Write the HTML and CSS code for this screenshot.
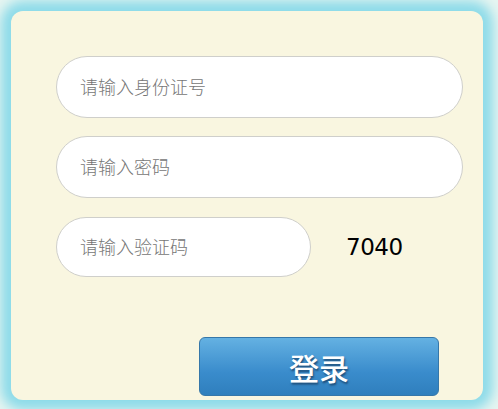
FILE: index.html
```html
<!DOCTYPE html>
<html lang="zh">
<head>
<meta charset="utf-8">
<link rel="stylesheet" href="styles.css">
</head>
<body>
  <div class="card">
    <form class="form">
      <input class="field" type="text" placeholder="请输入身份证号">
      <input class="field" type="password" placeholder="请输入密码">
      <div class="code-row">
        <input class="field code" type="text" placeholder="请输入验证码">
        <span class="captcha">7040</span>
      </div>
      <button class="login" type="button">登录</button>
    </form>
  </div>
</body>
</html>
```
FILE: styles.css
```css
html, body {
  margin: 0;
  padding: 0;
  background: #e6f5f1;
}
body {
  width: 498px;
  height: 409px;
  padding: 11px;
  box-sizing: border-box;
  overflow: hidden;
}
.card {
  width: 472px;
  height: 389px;
  box-sizing: border-box;
  background: #f9f6e0;
  border-radius: 12px;
  box-shadow: 0 0 12px 10px #8ddbe9;
  padding: 45px 0 0 45px;
}
.form {
  display: flex;
  flex-direction: column;
  width: 407px;
}
.field {
  box-sizing: border-box;
  width: 407px;
  height: 62px;
  margin: 0 0 18px 0;
  padding: 0 0 3px 23px;
  border: 1px solid #cfcfcb;
  border-radius: 31px;
  background: #fff;
  font-family: "Noto Sans CJK SC", "Noto Sans", sans-serif;
  font-size: 18px;
  font-weight: 300;
  color: #333;
  outline: none;
}
.field::placeholder {
  color: #767676;
}
.code-row {
  display: flex;
  align-items: center;
  margin-top: 1px;
}
.field.code {
  width: 255px;
  height: 60px;
  margin: 0;
  border-radius: 30px;
}
.captcha {
  margin-left: 35px;
  margin-bottom: 1px;
  font-family: "DejaVu Sans", sans-serif;
  font-size: 23px;
  letter-spacing: -0.5px;
  color: #000;
}
.login {
  margin: 60px 0 0 143px;
  width: 240px;
  height: 59px;
  box-sizing: border-box;
  border: 1px solid #3677a9;
  border-radius: 6px;
  background: linear-gradient(#64b1e2, #3a8ccc 60%, #2f7fbd);
  color: #fff;
  font-family: "Noto Sans CJK SC", sans-serif;
  font-size: 30px;
  font-weight: 500;
  text-shadow: 1px 2px 2px #1f4f7a;
  padding: 0;
  cursor: pointer;
}
```
